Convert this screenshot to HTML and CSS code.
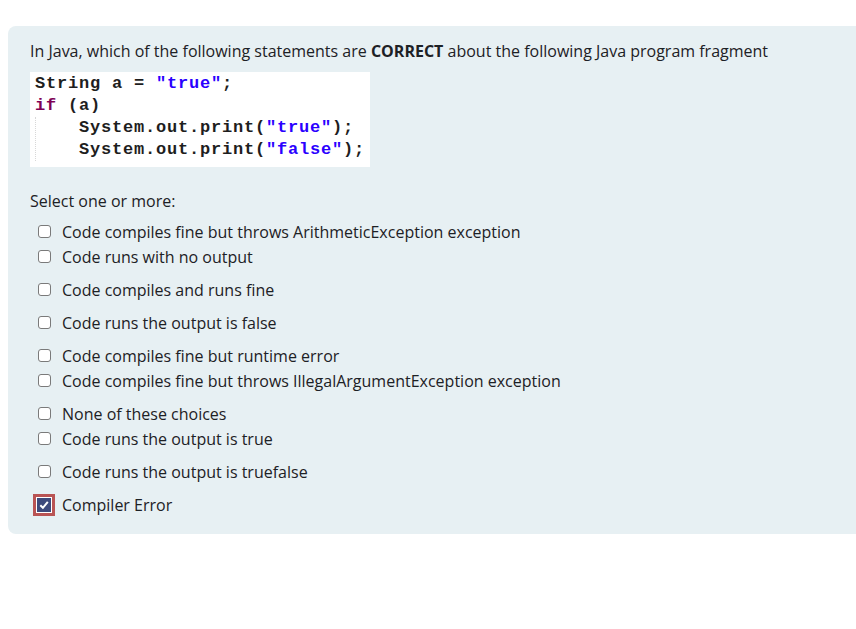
FILE: index.html
```html
<!DOCTYPE html>
<html>
<head>
<meta charset="utf-8">
<link rel="stylesheet" href="styles.css">
</head>
<body>
<div class="panel">
  <div class="qtext">In Java, which of the following statements are <strong>CORRECT</strong> about the following Java program fragment</div>
  <div class="code">
    <div class="line"><span class="plain">String a = </span><span class="str">"true"</span><span class="plain">;</span></div>
    <div class="line"><span class="kw">if</span><span class="plain"> (a)</span></div>
    <div class="block">
      <div class="line indent"><span class="plain">System.out.print(</span><span class="str">"true"</span><span class="plain">);</span></div>
      <div class="line indent"><span class="plain">System.out.print(</span><span class="str">"false"</span><span class="plain">);</span></div>
    </div>
  </div>
  <div class="prompt">Select one or more:</div>
  <div class="answers">
    <label class="opt"><span class="box"></span>Code compiles fine but throws ArithmeticException exception</label>
    <label class="opt tight"><span class="box"></span>Code runs with no output</label>
    <label class="opt"><span class="box"></span>Code compiles and runs fine</label>
    <label class="opt"><span class="box"></span>Code runs the output is false</label>
    <label class="opt"><span class="box"></span>Code compiles fine but runtime error</label>
    <label class="opt tight"><span class="box"></span>Code compiles fine but throws IllegalArgumentException exception</label>
    <label class="opt"><span class="box"></span>None of these choices</label>
    <label class="opt tight"><span class="box"></span>Code runs the output is true</label>
    <label class="opt"><span class="box"></span>Code runs the output is truefalse</label>
    <label class="opt"><span class="box checked"><svg viewBox="0 0 12 12" width="12" height="12"><path d="M2.3 6.2 L4.9 8.8 L9.8 2.8" fill="none" stroke="#fff" stroke-width="2"/></svg></span>Compiler Error</label>
  </div>
</div>
</body>
</html>
```
FILE: styles.css
```css
html, body {
  margin: 0;
  padding: 0;
  background: #fff;
}
body {
  padding: 26px 0 0 8px;
  font-family: "Open Sans", "Liberation Sans", sans-serif;
  color: #1d2125;
}
.panel {
  background: #e7f0f3;
  border-radius: 8px 0 0 8px;
  padding: 13px 0 14px 22px;
  height: 481px;
  box-sizing: content-box;
}
.qtext {
  font-size: 16px;
  line-height: 24px;
}
.qtext strong {
  font-weight: 700;
}
.code {
  margin-top: 9px;
  width: 340px;
  height: 95px;
  background: #fff;
  box-sizing: border-box;
  padding: 1px 0 0 5px;
  font-family: "Liberation Mono", "Courier New", monospace;
  font-weight: 700;
  font-size: 17px;
  letter-spacing: 0.8px;
}
.line {
  height: 22px;
  line-height: 22px;
  white-space: pre;
}
.block {
  border-left: 1px dotted #d8d8d8;
}
.indent {
  padding-left: 43px;
}
.plain { color: #1e1e1e; }
.kw { color: #7f0055; }
.str { color: #2a00ff; }
.prompt {
  margin-top: 24px;
  font-size: 16px;
  line-height: 20px;
}
.answers {
  margin-top: 8px;
  display: flex;
  flex-direction: column;
}
.opt {
  display: flex;
  align-items: center;
  height: 25px;
  margin-top: 8px;
  font-size: 16px;
  padding-left: 8px;
}
.opt:first-child { margin-top: 0; }
.opt.tight { margin-top: 0; }
.box {
  width: 11px;
  height: 11px;
  border: 1px solid #7a7a7a;
  border-radius: 3px;
  background: #fff;
  margin-right: 11px;
  flex: none;
  display: flex;
  align-items: center;
  justify-content: center;
}
.box.checked {
  width: 14px;
  height: 14px;
  margin-left: -2px;
  margin-right: 10px;
  background: #3d4a7c;
  border-color: #fff;
  outline: 3px solid #b95454;
  border-radius: 0;
}
```
